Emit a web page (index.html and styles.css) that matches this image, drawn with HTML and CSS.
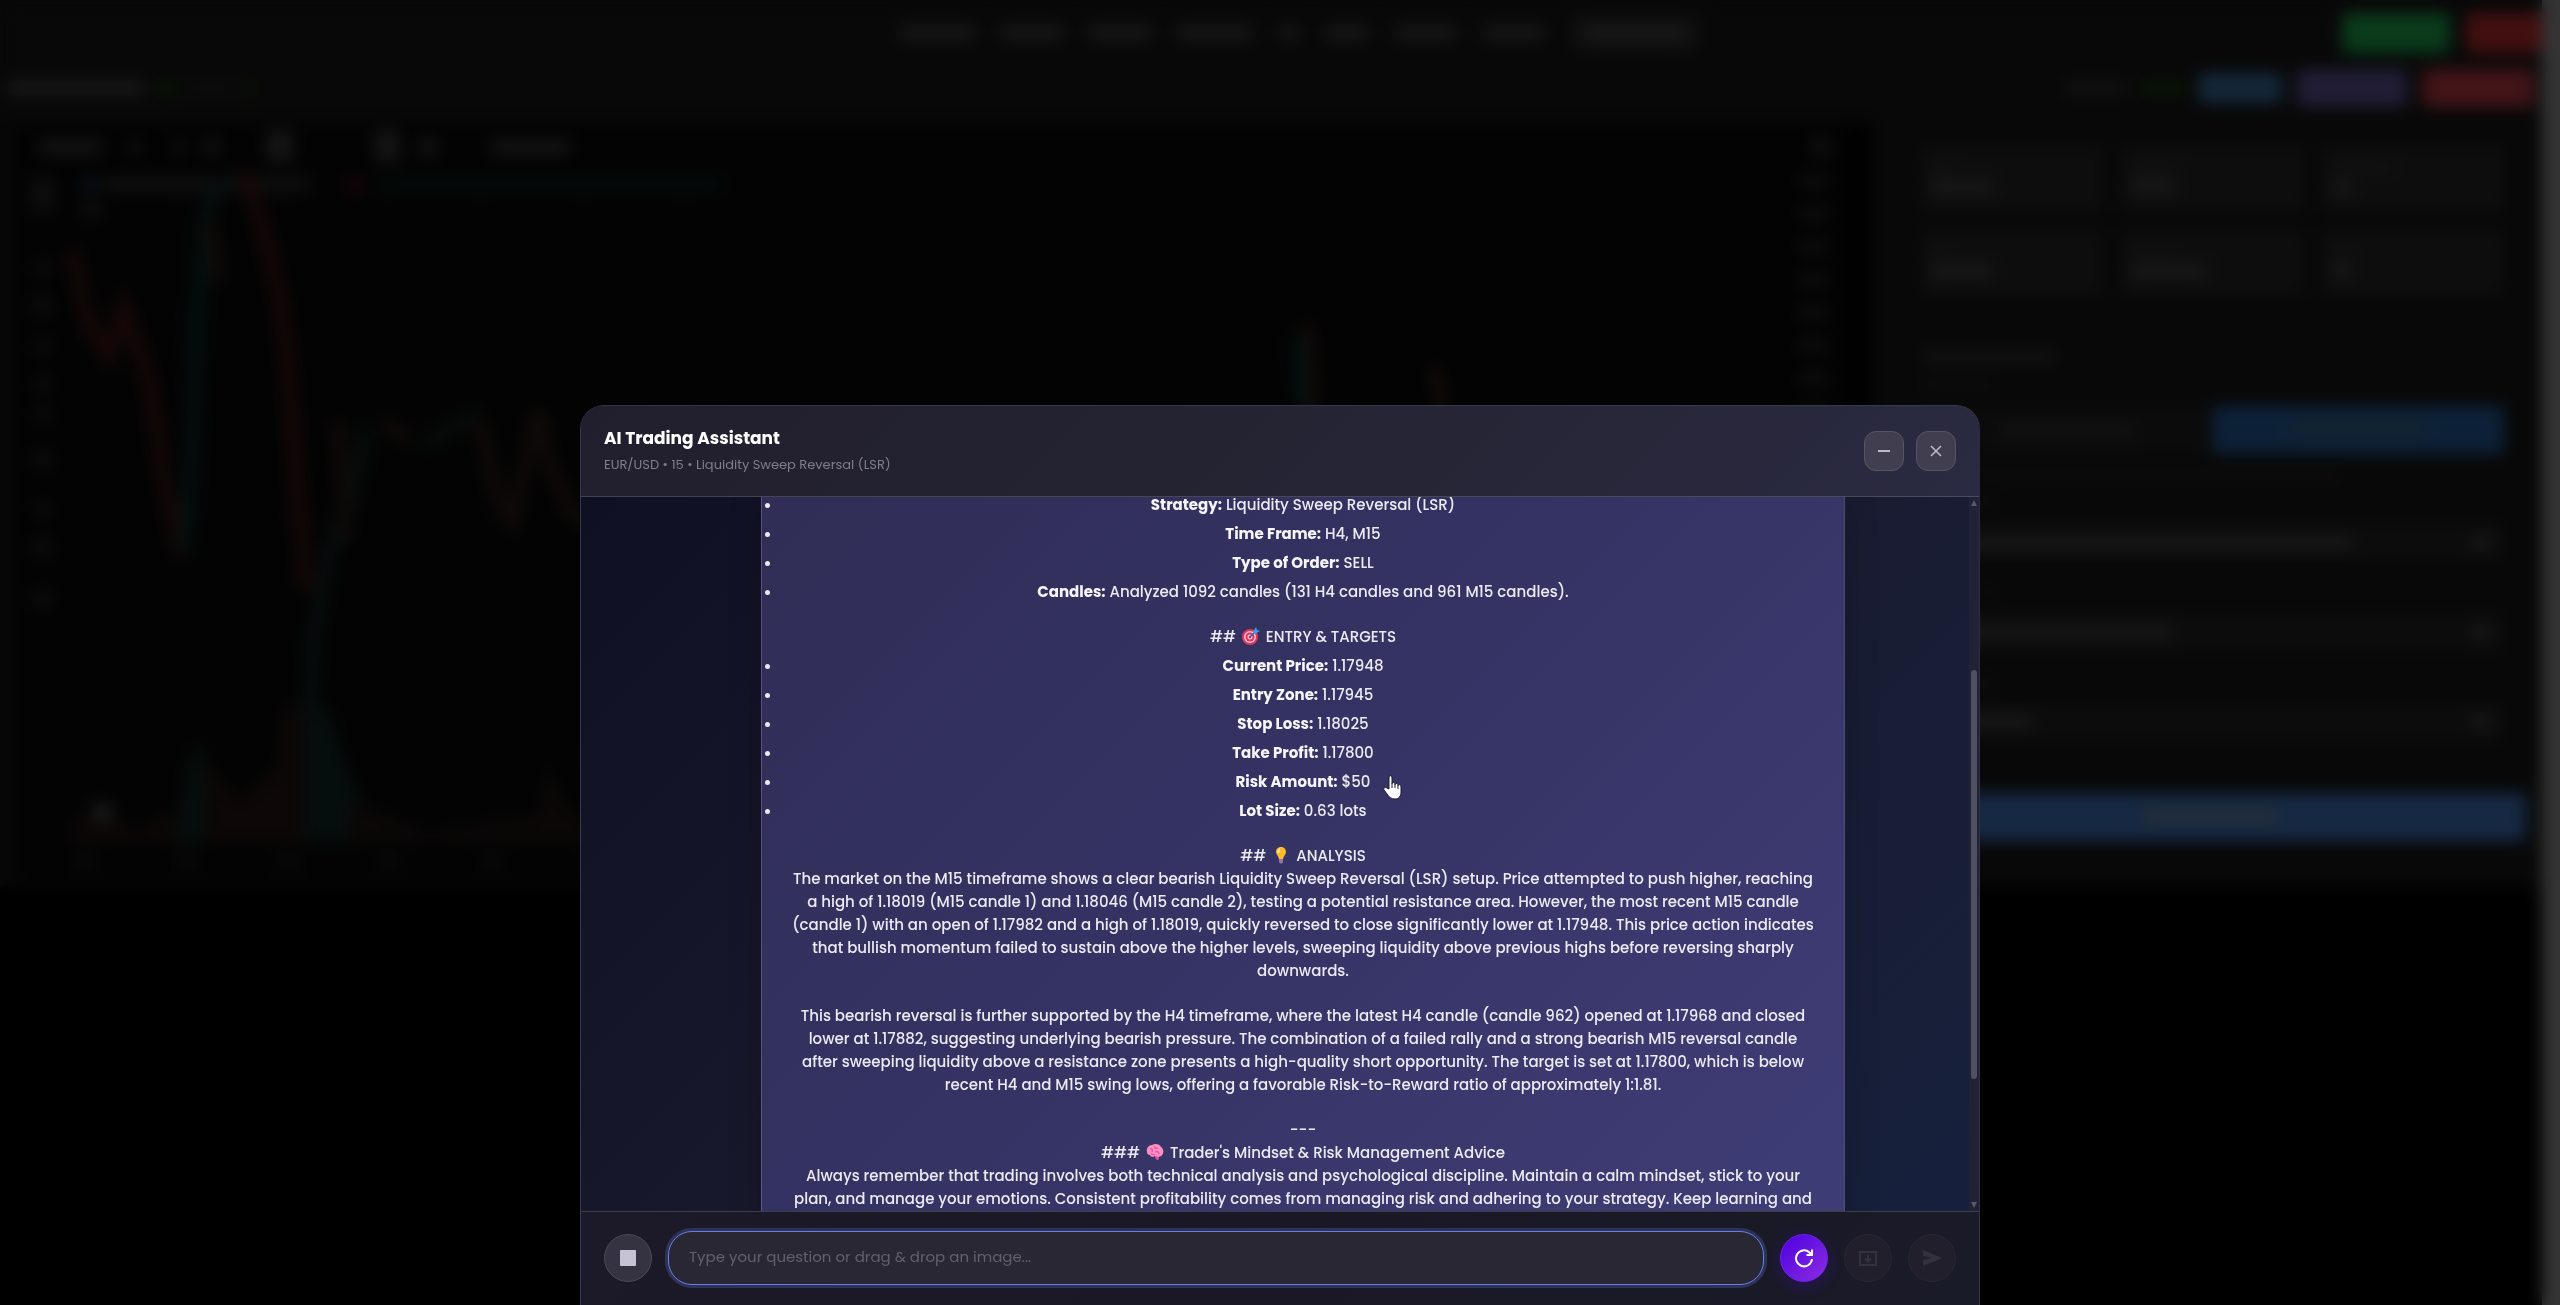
FILE: index.html
```html
<!DOCTYPE html>
<html lang="en">
<head>
    <meta charset="UTF-8">
    <meta name="viewport" content="width=device-width, initial-scale=1.0">
    <title>AI Trading Assistant</title>
    <link rel="stylesheet" href="styles.css">
</head>
<body>
<!-- Dashboard behind the modal -->
<div class="page" aria-hidden="true">
    <div class="page-body">
        <header class="topbar">
            <nav class="topnav">
                <i class="bar w80"></i><i class="bar w60"></i><i class="bar w60"></i><i class="bar w80"></i><i class="bar w20"></i><i class="bar w40"></i><i class="bar w60"></i><i class="bar w60"></i>
                <span class="nav-select"><i class="bar w100"></i></span>
            </nav>
            <div class="top-actions">
                <span class="pill green"></span>
                <span class="pill red"></span>
            </div>
        </header>
        <div class="subbar">
            <i class="bar w140"></i><i class="bar lime w20"></i><i class="bar faint w40"></i><i class="bar lime w10"></i>
            <div class="sub-actions">
                <i class="bar dim w60"></i><i class="bar lime w40"></i>
                <span class="chip blue"></span>
                <span class="chip purple"></span>
                <span class="chip crimson"></span>
            </div>
        </div>
        <div class="workspace">
            <section class="chart">
                <svg viewBox="0 0 1860 760" preserveAspectRatio="none">
                    <!-- grid -->
                    <g stroke="#141414" stroke-width="3">
                        <path d="M82 60V730M180 60V730M282 60V730M383 60V730M484 60V730M585 60V730M686 60V730M750 60V730M837 60V730M895 60V730M980 60V730M1080 60V730M1180 60V730M1282 60V730M1383 60V730M1485 60V730M1586 60V730M1687 60V730"/>
                        <path d="M82 58H1790M82 125H1790M82 192H1790M82 225H1790M82 305H1790M82 395H1790M82 460H1790M82 525H1790M82 595H1790"/>
                    </g>
                    <rect width="14" height="760" fill="#171717"/>
                    <!-- toolbar -->
                    <g fill="#484848">
                        <rect x="40" y="18" width="62" height="14"/>
                        <rect x="132" y="18" width="8" height="14"/>
                        <rect x="175" y="18" width="8" height="14"/>
                        <rect x="205" y="18" width="15" height="14"/>
                        <rect x="268" y="8" width="26" height="32"/>
                        <rect x="377" y="8" width="24" height="32"/>
                        <rect x="420" y="18" width="20" height="14"/>
                        <rect x="493" y="18" width="80" height="14"/>
                        <rect x="1822" y="18" width="16" height="14"/>
                    </g>
                    <rect x="85" y="56" width="12" height="14" fill="#20407a"/>
                    <rect x="104" y="57" width="206" height="11" fill="#404040"/>
                    <rect x="350" y="56" width="12" height="14" fill="#780c24"/>
                    <rect x="380" y="58" width="345" height="10" fill="#0a302b"/>
                    <rect x="84" y="82" width="16" height="12" fill="#444"/>
                    <!-- drawing tools -->
                    <g fill="#303030">
                        <rect x="32" y="56" width="22" height="34"/>
                        <rect x="36" y="140" width="14" height="14"/>
                        <rect x="34" y="176" width="18" height="16"/>
                        <rect x="36" y="218" width="14" height="14"/>
                        <rect x="36" y="256" width="14" height="14"/>
                        <rect x="36" y="285" width="14" height="14"/>
                        <rect x="34" y="330" width="18" height="16"/>
                        <rect x="36" y="382" width="14" height="14"/>
                        <rect x="34" y="418" width="18" height="16"/>
                        <rect x="34" y="470" width="18" height="16"/>
                    </g>
                    <!-- price scale -->
                    <path d="M1823 53V410" stroke="#303030" stroke-width="30" stroke-dasharray="12 21"/>
                    <!-- candles -->
                    <g fill="none" stroke-width="13">
                        <path stroke="#521a1c" d="M72 130L88 200L110 235L124 185L150 260L165 360L182 435"/>
                        <path stroke="#0c3a34" d="M184 430L192 360L198 200L207 90L222 60"/>
                        <path stroke="#382320" d="M210 100L220 160"/>
                        <path stroke="#521a1c" d="M245 50L262 100L282 180L292 270L298 360L308 470"/>
                        <path stroke="#16302c" d="M310 620L315 520L330 430L350 385L368 310"/>
                        <path stroke="#382320" d="M340 300L348 420M385 300L410 320"/>
                        <path stroke="#162a26" d="M425 325L478 292"/>
                        <path stroke="#382320" d="M482 300L498 370L515 400L540 290L555 350L575 395L620 400"/>
                        <path stroke="#462320" d="M1314 205L1318 290M1440 245L1450 290"/>
                        <path stroke="#0c3a34" d="M1306 215L1308 290"/>
                    </g>
                    <!-- volume -->
                    <path fill="#2c1818" d="M70 722V705L100 690L140 712L170 690L180 722Z"/>
                    <path fill="#12302b" d="M175 722L190 640L205 620L215 722Z"/>
                    <path fill="#2c1818" d="M205 722V640L240 680L275 650L290 580L304 590V722Z"/>
                    <path fill="#12302b" d="M304 722V570L330 590L350 650L380 722Z"/>
                    <path fill="#231a18" d="M350 722V680L430 712L540 695L550 640L570 690L640 722Z"/>
                    <circle cx="103" cy="692" r="10" fill="#606060"/>
                    <path d="M76 740H1600" stroke="#262626" stroke-width="12" stroke-dasharray="20 82"/>
                </svg>
            </section>
            <aside class="side">
                <div class="cards">
                    <div class="card"><i class="bar dim w20"></i><i class="bar w60"></i></div>
                    <div class="card"><i class="bar dim w40"></i><i class="bar w40"></i></div>
                    <div class="card"><i class="bar dim w60"></i><i class="bar w20"></i></div>
                    <div class="card"><i class="bar dim w20"></i><i class="bar w60"></i></div>
                    <div class="card"><i class="bar dim w40"></i><i class="bar w80"></i></div>
                    <div class="card"><i class="bar dim w20"></i><i class="bar w20"></i></div>
                </div>
                <div class="setup">
                    <i class="bar dim w140"></i>
                    <i class="bar faint w80"></i>
                    <div class="modes">
                        <span class="mode"><i class="bar dim w140"></i></span>
                        <span class="mode on"><i class="bar w140"></i></span>
                    </div>
                    <i class="bar faint w420"></i>
                    <i class="bar faint w80"></i>
                    <div class="field"><i class="bar w420"></i><i class="bar w20"></i></div>
                    <i class="bar faint w80"></i>
                    <div class="field"><i class="bar w240"></i><i class="bar w20"></i></div>
                    <i class="bar faint w80"></i>
                    <div class="field"><i class="bar w100"></i><i class="bar w20"></i></div>
                </div>
                <div class="run"><i class="bar w140"></i></div>
            </aside>
        </div>
    </div>
    <div class="page-scroll"></div>
</div>

<div class="overlay">
    <section class="modal" role="dialog" aria-labelledby="modal-title">
        <header class="modal-header">
            <div class="modal-heading">
                <h2 id="modal-title">AI Trading Assistant</h2>
                <p>EUR/USD • 15 • Liquidity Sweep Reversal (LSR)</p>
            </div>
            <div class="modal-controls">
                <button type="button" class="control-btn" aria-label="Minimize">
                    <svg width="16" height="16" viewBox="0 0 16 16"><path d="M2 8H14" stroke="currentColor" stroke-width="2"/></svg>
                </button>
                <button type="button" class="control-btn" aria-label="Close">
                    <svg width="16" height="16" viewBox="0 0 16 16"><path d="M3 3L13 13M13 3L3 13" stroke="currentColor" stroke-width="1.5"/></svg>
                </button>
            </div>
        </header>

        <div class="chat">
            <div class="messages">
                <div class="message">
                    <ul>
                        <li><strong>Strategy:</strong> Liquidity Sweep Reversal (LSR)</li>
                        <li><strong>Time Frame:</strong> H4, M15</li>
                        <li><strong>Type of Order:</strong> SELL</li>
                        <li><strong>Candles:</strong> Analyzed 1092 candles (131 H4 candles and 961 M15 candles).</li>
                    </ul>
                    <div class="line">##
                        <svg class="emoji" viewBox="0 0 18 18">
                            <circle cx="8" cy="10" r="8" fill="#e8325c"/>
                            <circle cx="8" cy="10" r="6" fill="#f5c6d6"/>
                            <circle cx="8" cy="10" r="4.500" fill="#e8325c"/>
                            <circle cx="8" cy="10" r="2.500" fill="#f5c6d6"/>
                            <circle cx="8" cy="10" r="1.200" fill="#c81e4a"/>
                            <path d="M8 10L14 4" stroke="#1c6fb5" stroke-width="1.500"/>
                            <path d="M11 5L14 0L15 3L18 4L13 7Z" fill="#2fa3ee"/>
                        </svg>
                        ENTRY &amp; TARGETS</div>
                    <ul class="targets">
                        <li><strong>Current Price:</strong> 1.17948</li>
                        <li><strong>Entry Zone:</strong> 1.17945</li>
                        <li><strong>Stop Loss:</strong> 1.18025</li>
                        <li><strong>Take Profit:</strong> 1.17800</li>
                        <li><strong>Risk Amount:</strong> $50</li>
                        <li><strong>Lot Size:</strong> 0.63 lots</li>
                    </ul>
                    <div class="line">##
                        <svg class="emoji" viewBox="0 0 18 18">
                            <path d="M9 1C5.500 1 4 3.500 4 6C4 8.500 6.500 10 7 13H11C11.500 10 14 8.500 14 6C14 3.500 12.500 1 9 1Z" fill="#fbb92e"/>
                            <path d="M8 2C6 2.500 5 4.500 5.500 6.500C6 8 7.500 7 8 5Z" fill="#ffe48a"/>
                            <path d="M7 13H11V16L10 17.500H8L7 16Z" fill="#8f7aa8"/>
                        </svg>
                        ANALYSIS</div>
                    <p class="first">The market on the M15 timeframe shows a clear bearish Liquidity Sweep Reversal (LSR) setup. Price attempted to push higher, reaching<br>
                        a high of 1.18019 (M15 candle 1) and 1.18046 (M15 candle 2), testing a potential resistance area. However, the most recent M15 candle<br>
                        (candle 1) with an open of 1.17982 and a high of 1.18019, quickly reversed to close significantly lower at 1.17948. This price action indicates<br>
                        that bullish momentum failed to sustain above the higher levels, sweeping liquidity above previous highs before reversing sharply<br>
                        downwards.</p>
                    <p>This bearish reversal is further supported by the H4 timeframe, where the latest H4 candle (candle 962) opened at 1.17968 and closed<br>
                        lower at 1.17882, suggesting underlying bearish pressure. The combination of a failed rally and a strong bearish M15 reversal candle<br>
                        after sweeping liquidity above a resistance zone presents a high-quality short opportunity. The target is set at 1.17800, which is below<br>
                        recent H4 and M15 swing lows, offering a favorable Risk-to-Reward ratio of approximately 1:1.81.</p>
                    <p>---<br>
                        ###
                        <svg class="emoji" viewBox="0 0 18 18">
                            <path d="M1 9C0 5 3 2 6 2C9 0 14 1 15 4C18 6 18 10 16 12C15 14 13 13 13 14L12 17L10 16L9 13C6 15 4 13 4 12C2 12 1 11 1 9Z" fill="#ff8fc0"/>
                            <path d="M4 6C6 5 7 7 6 9M9 3C8 5 10 6 12 5M9 9C11 8 13 9 13 11M5 11C7 12 8 11 9 12" fill="none" stroke="#e64fb4" stroke-width="1.200"/>
                            <path d="M9 13L10 16L12 17L13 14Z" fill="#f03fae"/>
                        </svg>
                        Trader's Mindset &amp; Risk Management Advice<br>
                        Always remember that trading involves both technical analysis and psychological discipline. Maintain a calm mindset, stick to your<br>
                        plan, and manage your emotions. Consistent profitability comes from managing risk and adhering to your strategy. Keep learning and</p>
                </div>
            </div>
            <div class="scrollbar">
                <span class="arrow up"></span>
                <span class="before"></span>
                <span class="thumb"></span>
                <span class="after"></span>
                <span class="arrow down"></span>
            </div>
        </div>

        <form class="composer">
            <button type="button" class="round-btn" aria-label="Stop">
                <svg width="16" height="16" viewBox="0 0 16 16"><rect width="16" height="16" rx="1" fill="#c6c4d4"/></svg>
            </button>
            <input type="text" class="question" aria-label="Question" placeholder="Type your question or drag &amp; drop an image...">
            <button type="button" class="round-btn refresh" aria-label="Refresh">
                <svg width="24" height="24" viewBox="0 0 24 24" fill="none" stroke="#fff" stroke-width="2"><path d="M20 13A8 8 0 1 1 17.500 6.500L20 9"/><path d="M20 3.500V9H14.500"/></svg>
            </button>
            <button type="button" class="round-btn" aria-label="Save chat" disabled>
                <svg width="20" height="20" viewBox="0 0 20 20" fill="none" stroke="currentColor" stroke-width="2"><rect x="2" y="4" width="16" height="13"/><path d="M10 7V13M7 10.500L10 13.500L13 10.500"/></svg>
            </button>
            <button type="button" class="round-btn" aria-label="Send" disabled>
                <svg width="20" height="20" viewBox="0 0 20 20"><path d="M1 2L20 10L1 18V12L9 10L1 8Z" fill="currentColor"/></svg>
            </button>
        </form>
    </section>
</div>

<!-- pointer -->
<svg class="pointer" width="20" height="25" viewBox="0 0 20 25" aria-hidden="true">
    <path d="M6 14V3C6 0 9 0 9 3V9C9 7 12 7 12 9V10C12 8 15 8 15 10V11C15 9 18 9 18 12V17C18 21 16 24 12 24C8 24 6 22 4 19L1 15C0 13 2 12 4 13Z" fill="#fff" stroke="#1a1a30" stroke-width="1"/>
    <path d="M9 9V13M12 10V13M15 11V14" stroke="#1a1a30" stroke-width="1"/>
</svg>
</body>
</html>
```
FILE: styles.css
```css
* {
    margin: 0;
    padding: 0;
    box-sizing: border-box;
}

body {
    font-family: Poppins, Inter, sans-serif;
    height: 100vh;
    overflow: hidden;
    background: #000;
    color: #fff;
}

/* Dashboard */
.page {
    display: flex;
    height: 100vh;
    overflow: hidden;
}

.page-body {
    flex: 1;
    min-width: 0;
    align-self: flex-start;
    background: #1b1b1b;
    padding-bottom: 6px;
}

.page-scroll {
    width: 18px;
    background: #b0b0b0;
}

.bar {
    display: block;
    height: 14px;
    background: #545454;
    border-radius: 4px;
}

.bar.dim { background: #3c3c3c; }
.bar.faint { background: #2a2a2a; height: 12px; }
.bar.lime { background: #1f4d10; }

.w10 { width: 10px; }
.w20 { width: 20px; }
.w40 { width: 44px; }
.w60 { width: 62px; }
.w80 { width: 76px; }
.w100 { width: 100px; }
.w140 { width: 136px; }
.w240 { width: 240px; }
.w420 { width: 420px; }

.topbar {
    display: grid;
    grid-template-columns: 1fr auto 1fr;
    align-items: center;
    height: 66px;
}

.topnav {
    grid-column: 2;
    display: flex;
    align-items: center;
    gap: 26px;
    padding-left: 56px;
}

.nav-select {
    padding: 10px 14px;
    background: #363636;
}

.top-actions {
    display: flex;
    justify-content: flex-end;
    gap: 16px;
}

.pill {
    width: 108px;
    height: 40px;
    border-radius: 6px;
}

.pill.red { width: 76px; }

.green { background: #22c55e; }
.red { background: #dc3535; }

.subbar {
    display: flex;
    align-items: center;
    gap: 12px;
    height: 44px;
    padding: 0 8px;
}

.sub-actions {
    display: flex;
    align-items: center;
    gap: 14px;
    margin-left: auto;
}

.chip {
    width: 112px;
    height: 38px;
    border-radius: 6px;
}

.chip.blue { width: 84px; height: 30px; background: #4584bc; }
.chip.purple { background: #6c63b0; }
.chip.crimson { background: #dc4550; }

.workspace {
    display: flex;
    padding-top: 12px;
}

.chart {
    flex: 3;
    min-width: 0;
    height: 758px;
    background: #0b0b0b;
}

.chart svg {
    display: block;
    width: 100%;
    height: 100%;
}

.side {
    flex: 1;
    padding: 24px 16px 0 40px;
    border-left: 18px solid #000;
}

.cards {
    display: grid;
    grid-template-columns: repeat(3, 1fr);
    gap: 18px;
    padding: 0 22px 0 12px;
}

.card {
    display: flex;
    flex-direction: column;
    justify-content: center;
    gap: 8px;
    height: 66px;
    padding-left: 10px;
    background: #2e2e2e;
}

.card .bar.dim { height: 8px; }

.setup {
    display: flex;
    flex-direction: column;
    gap: 15px;
    padding: 54px 22px 0 12px;
}

.modes {
    display: flex;
}

.mode {
    flex: 1;
    display: flex;
    align-items: center;
    justify-content: center;
    height: 48px;
    background: #262626;
}

.mode.on { background: #2b70bb; }

.mode.on .bar { background: #45759c; }

.field {
    display: flex;
    align-items: center;
    justify-content: space-between;
    height: 38px;
    margin-bottom: 10px;
    padding: 0 12px;
    background: #292929;
}

.run {
    display: flex;
    align-items: center;
    justify-content: center;
    height: 48px;
    margin: 42px 0 0 -16px;
    background: #4a8ae0;
}

.run .bar { background: #7898b8; }

/* Modal */
.overlay {
    position: fixed;
    inset: 0;
    display: flex;
    align-items: flex-end;
    justify-content: center;
    background: rgba(0, 0, 0, 0.7);
    backdrop-filter: blur(8px);
}

.modal {
    display: flex;
    flex-direction: column;
    width: 100%;
    max-width: 1400px;
    height: 100%;
    max-height: 900px;
    border: 1px solid rgba(255, 255, 255, 0.12);
    border-bottom: 0;
    border-radius: 24px 24px 0 0;
    background: linear-gradient(135deg, #0f0f23 0%, #1a1a2e 50%, #16213e 100%);
    overflow: hidden;
}

.modal-header {
    display: flex;
    align-items: center;
    justify-content: space-between;
    height: 91px;
    padding: 0 23px;
    background: linear-gradient(135deg, #211f2e, #252433 50%, #2a2a42);
    border-bottom: 1px solid rgba(255, 255, 255, 0.16);
}

.modal-heading h2 {
    font-size: 17px;
    line-height: 28px;
    font-weight: 700;
}

.modal-heading p {
    font-size: 13px;
    line-height: 26px;
    color: #807e8c;
}

.modal-controls {
    display: flex;
    gap: 12px;
}

.control-btn {
    display: grid;
    place-items: center;
    width: 40px;
    height: 40px;
    border: 1px solid #565464;
    border-radius: 12px;
    background: #413f4f;
    color: #bebccb;
}

/* Chat */
.chat {
    flex: 1;
    display: flex;
    min-height: 0;
}

.messages {
    flex: 1;
    min-width: 0;
    padding: 0 124px 0 180px;
    overflow: hidden;
}

.message {
    margin-top: -4px;
    padding: 0 20px 24px;
    border: 1px solid rgba(255, 255, 255, 0.14);
    border-width: 0 1px;
    background: linear-gradient(135deg, #302d56, #343262 40%, #3f3d76);
    box-shadow: 0 8px 32px rgba(0, 0, 0, 0.2);
    font-size: 15px;
    font-weight: 500;
    line-height: 23px;
    color: #ebeaf2;
    text-align: center;
    white-space: nowrap;
}

.message li {
    margin-bottom: 6px;
}

.message strong {
    font-weight: 700;
    color: #f6f5fa;
}

.message .line {
    margin-top: 22px;
}

.message .targets {
    margin-top: 6px;
}

.message p {
    margin-top: 22px;
}

.message .first {
    margin-top: 0;
}

.emoji {
    width: 18px;
    height: 18px;
    margin: 0 2px;
    vertical-align: -3px;
}

.scrollbar {
    display: flex;
    flex-direction: column;
    align-items: center;
    gap: 4px;
    width: 10px;
    padding: 3px 0;
    background: #222236;
}

.arrow {
    border: 3px solid transparent;
}

.arrow.up {
    border-top: 0;
    border-bottom: 6px solid #57566a;
}

.arrow.down {
    border-bottom: 0;
    border-top: 6px solid #57566a;
}

.before { flex: 158; }

.thumb {
    flex: 413;
    width: 6px;
    border-radius: 3px;
    background: #505063;
}

.after { flex: 116; }

/* Composer */
.composer {
    display: flex;
    align-items: center;
    gap: 16px;
    padding: 19px 23px 20px;
    background: linear-gradient(135deg, #1c1a28, #1a1824 50%, #1a1b29);
    border-top: 1px solid rgba(255, 255, 255, 0.16);
}

.round-btn {
    display: grid;
    place-items: center;
    width: 48px;
    height: 48px;
    border: 1px solid #4b4958;
    border-radius: 50%;
    background: #353342;
}

.round-btn.refresh {
    border-color: #6a24e8;
    background: linear-gradient(135deg, #4a00e0, #8e2de2);
    box-shadow: 0 4px 15px rgba(74, 0, 224, 0.3);
}

.round-btn:disabled {
    border-color: #292735;
    background: #201f2b;
    color: #33313d;
}

.question {
    flex: 1;
    min-width: 0;
    height: 54px;
    padding: 0 20px 4px;
    border: 1px solid #667eea;
    border-radius: 24px;
    background: #292733;
    box-shadow: 0 0 0 3px rgba(102, 126, 234, 0.25);
    color: #fff;
    font-family: inherit;
    font-size: 15px;
    outline: none;
}

.question::placeholder {
    color: #62606d;
}

/* sits over the message text */
.pointer {
    position: fixed;
    left: 1383px;
    top: 775px;
}
```
